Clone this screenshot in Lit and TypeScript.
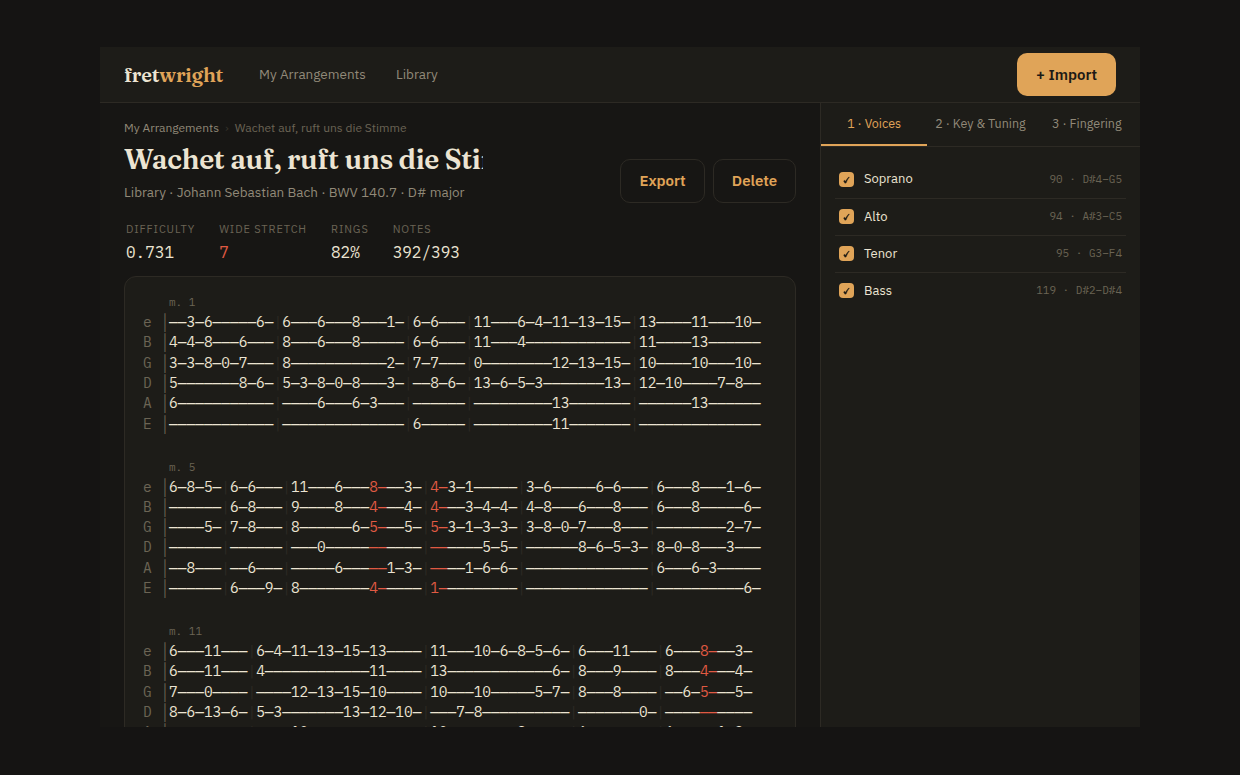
import { LitElement, html, css } from "lit";
import { customElement, property } from "lit/decorators.js";

type System = { measure: number; rows: string[] };

const STRINGS = ["e", "B", "G", "D", "A", "E"];

// "-" is a rest dash, "|" a bar line, and [..] marks a wide stretch.
const SYSTEMS: System[] = [
  {
    measure: 1,
    rows: [
      "--3-6-----6-|6---6---8---1-|6-6---|11---6-4-11-13-15-|13----11---10-",
      "4-4-8---6---|8---6---8-----|6-6---|11---4------------|11----13------",
      "3-3-8-0-7---|8-----------2-|7-7---|0--------12-13-15-|10----10---10-",
      "5-------8-6-|5-3-8-0-8---3-|--8-6-|13-6-5-3-------13-|12-10----7-8--",
      "6-----------|----6---6-3---|------|---------13-------|------13------",
      "------------|--------------|6-----|---------11-------|--------------",
    ],
  },
  {
    measure: 5,
    rows: [
      "6-8-5-|6-6---|11---6---[8-]--3-|[4-]3-1-----|3-6-----6-6---|6---8---1-6-",
      "------|6-8---|9----8---[4-]--4-|[4-]--3-4-4-|4-8---6---8---|6---8-----6-",
      "----5-|7-8---|8------6-[5-]--5-|[5-]3-1-3-3-|3-8-0-7---8---|--------2-7-",
      "------|------|---0-----[--]----|[--]----5-5-|------8-6-5-3-|8-0-8---3---",
      "--8---|--6---|-----6---[--]1-3-|[--]--1-6-6-|--------------|6---6-3-----",
      "------|6---9-|8--------[4-]----|[1-]--------|--------------|----------6-",
    ],
  },
  {
    measure: 11,
    rows: [
      "6---11---|6-4-11-13-15-13----|11---10-6-8-5-6-|6---11---|6---[8-]--3-",
      "6---11---|4------------11----|13------------6-|8---9----|8---[4-]--4-",
      "7---0----|----12-13-15-10----|10---10-----5-7-|8---8----|--6-[5-]--5-",
      "8-6-13-6-|5-3-------13-12-10-|---7-8----------|-------0-|----[--]----",
      "---------|----10-------------|10--------8-----|6--------|6---[--]1-3-",
      "---------|-------------------|----------------|---------|----[4-]----",
    ],
  },
];

const VOICES = [
  { name: "Soprano", meta: "90 · D#4–G5" },
  { name: "Alto", meta: "94 · A#3–C5" },
  { name: "Tenor", meta: "95 · G3–F4" },
  { name: "Bass", meta: "119 · D#2–D#4" },
];

@customElement("tab-system")
class TabSystem extends LitElement {
  @property({ attribute: false }) system!: System;

  static styles = css`
    :host { display: block; font-family: "IBM Plex Mono", "Liberation Mono", monospace; }
    .measure { margin: 0 0 2.8px 26px; font-size: 11px; line-height: 14px; color: #6b6454; white-space: pre; }
    .row { height: 20.3px; line-height: 20.3px; font-size: 14.5px; white-space: pre; color: #ece4d2; }
    .name { color: #6b6454; }
    .bar { color: #2d2a24; }
    .wide { color: #e05a43; }
  `;

  private line(row: string) {
    return row.split(/(\||\[[^\]]*\])/).map((part) => {
      const text = part.replace(/-/g, "—");
      if (part === "|") return html`<span class="bar">|</span>`;
      if (part.startsWith("[")) return html`<span class="wide">${text.slice(1, -1)}</span>`;
      return html`<span>${text}</span>`;
    });
  }

  render() {
    return html`<div class="measure">m. ${this.system.measure}</div>
      ${this.system.rows.map(
        (row, i) => html`<div class="row"><span class="name">${STRINGS[i]} │</span>${this.line(row)}</div>`
      )}`;
  }
}

@customElement("app-root")
class AppRoot extends LitElement {
  static styles = css`
    :host {
      display: block; box-sizing: border-box; height: 775px; padding: 47px 100px 0; overflow: hidden;
      background: #151413; color: #ece4d2;
      font-family: "IBM Plex Sans", "Noto Sans", sans-serif; font-size: 13px;
    }
    * { box-sizing: border-box; }
    .app { height: 680px; display: flex; flex-direction: column; overflow: hidden; background: #171614; }
    header { height: 56px; flex: none; display: flex; align-items: center; padding: 0 24px; background: #1d1c18; border-bottom: 1px solid #2d2a24; }
    .logo { width: 99px; margin-right: 36px; font: 600 20px/28px "Fraunces", "Source Serif 4", "Liberation Serif", serif; letter-spacing: -0.2px; white-space: nowrap; }
    .logo b { font-weight: inherit; color: #e0a458; }
    nav { display: flex; gap: 30px; color: #918978; flex: 1; font-size: 13.5px; padding-bottom: 2px; }
    .btn { height: 44px; padding-bottom: 2px; border-radius: 10px; border: 1px solid #2d2a24; display: flex; align-items: center; justify-content: center; font-size: 15px; font-weight: 600; color: #e0a458; white-space: nowrap; }
    .primary { width: 99px; height: 43px; padding: 0; background: #e0a458; color: #1d1a15; border: 0; }
    .body { flex: 1; min-height: 0; display: grid; grid-template-columns: 720px 320px; }
    main { padding: 17px 24px 0; overflow: hidden; }
    .crumbs { font-size: 12px; line-height: 16px; color: #6b6454; display: flex; gap: 6px; white-space: nowrap; }
    .crumbs a { color: #918978; }
    .crumbs i { font-style: normal; color: #35322b; }
    .head { display: flex; justify-content: space-between; align-items: flex-end; height: 67px; }
    .title { width: 359px; overflow: hidden; white-space: nowrap; font: 580 28px/38px "Fraunces", "Source Serif 4", "Liberation Serif", serif; letter-spacing: -0.38px; }
    .sub { font-size: 13.5px; line-height: 18px; margin: 5px 0 2px; color: #918978; white-space: nowrap; }
    .actions { display: flex; gap: 8px; }
    .export { width: 85px; } .delete { width: 83px; }
    .stats { display: flex; gap: 24px; padding: 19px 2px 0; height: 73px; }
    .stat { white-space: nowrap; }
    .label { font-size: 11px; line-height: 14px; letter-spacing: 0.88px; color: #6b6454; text-transform: uppercase; }
    .value { font: 16px/21px "IBM Plex Mono", "Liberation Mono", monospace; margin-top: 6px; }
    .bad { color: #e05a43; }
    .card { border: 1px solid #2d2a24; border-radius: 12px; background: #1d1c18; padding: 18.4px 18px; display: flex; flex-direction: column; gap: 25.8px; height: 600px; }
    aside { border-left: 1px solid #2d2a24; background: #1d1c18; }
    .tabs { display: grid; grid-template-columns: repeat(3, 1fr); height: 44px; border-bottom: 1px solid #2d2a24; font-size: 12.5px; color: #918978; text-align: center; white-space: nowrap; }
    .tab { line-height: 41px; border-bottom: 2px solid transparent; }
    .active { color: #e0a458; border-color: #e0a458; }
    .voices { padding: 15px 14px; }
    .voice { height: 37px; padding: 0 4px; display: flex; align-items: center; border-bottom: 1px solid #2d2a24; }
    .voice:last-child { border-color: transparent; }
    .name { line-height: 18px; padding-bottom: 1px; }
    .voice:first-child .name { padding-bottom: 2px; }
    .check { width: 15px; height: 15px; border-radius: 4px; background: #e0a458; margin: -1px 10px 0 0; }
    .check svg { display: block; }
    .meta { margin: -2px 0 0 auto; font: 11px/16px "IBM Plex Mono", "Liberation Mono", monospace; color: #6b6454; }
  `;

  render() {
    return html`<div class="app">
      <header>
        <div class="logo">fret<b>wright</b></div>
        <nav><span>My Arrangements</span><span>Library</span></nav>
        <div class="btn primary">+ Import</div>
      </header>
      <div class="body">
        <main>
          <div class="crumbs"><a>My Arrangements</a><i>›</i><span>Wachet auf, ruft uns die Stimme</span></div>
          <div class="head">
            <div>
              <div class="title">Wachet auf, ruft uns die Stimme</div>
              <div class="sub">Library · Johann Sebastian Bach · BWV 140.7 · D# major</div>
            </div>
            <div class="actions"><div class="btn export">Export</div><div class="btn delete">Delete</div></div>
          </div>
          <div class="stats">
            <div class="stat"><div class="label">Difficulty</div><div class="value">0.731</div></div>
            <div class="stat"><div class="label">Wide stretch</div><div class="value bad">7</div></div>
            <div class="stat"><div class="label">Rings</div><div class="value">82%</div></div>
            <div class="stat"><div class="label">Notes</div><div class="value">392/393</div></div>
          </div>
          <div class="card">${SYSTEMS.map((s) => html`<tab-system .system=${s}></tab-system>`)}</div>
        </main>
        <aside>
          <div class="tabs"><div class="tab active">1 · Voices</div><div class="tab">2 · Key &amp; Tuning</div><div class="tab">3 · Fingering</div></div>
          <div class="voices">
            ${VOICES.map((v) => html`<div class="voice"><span class="check"><svg width="15" height="15" viewBox="0 0 15 15"><path d="M4.6 9 5.6 8.3 6.5 9.3Q7.8 7 9.7 5L10.4 5.1Q8.4 7.6 7.1 10.9L5.9 11.2Z" fill="#1d1a15" stroke="#1d1a15" stroke-width=".35"/></svg></span><span class="name">${v.name}</span><span class="meta">${v.meta}</span></div>`)}
          </div>
        </aside>
      </div>
    </div>`;
  }
}
